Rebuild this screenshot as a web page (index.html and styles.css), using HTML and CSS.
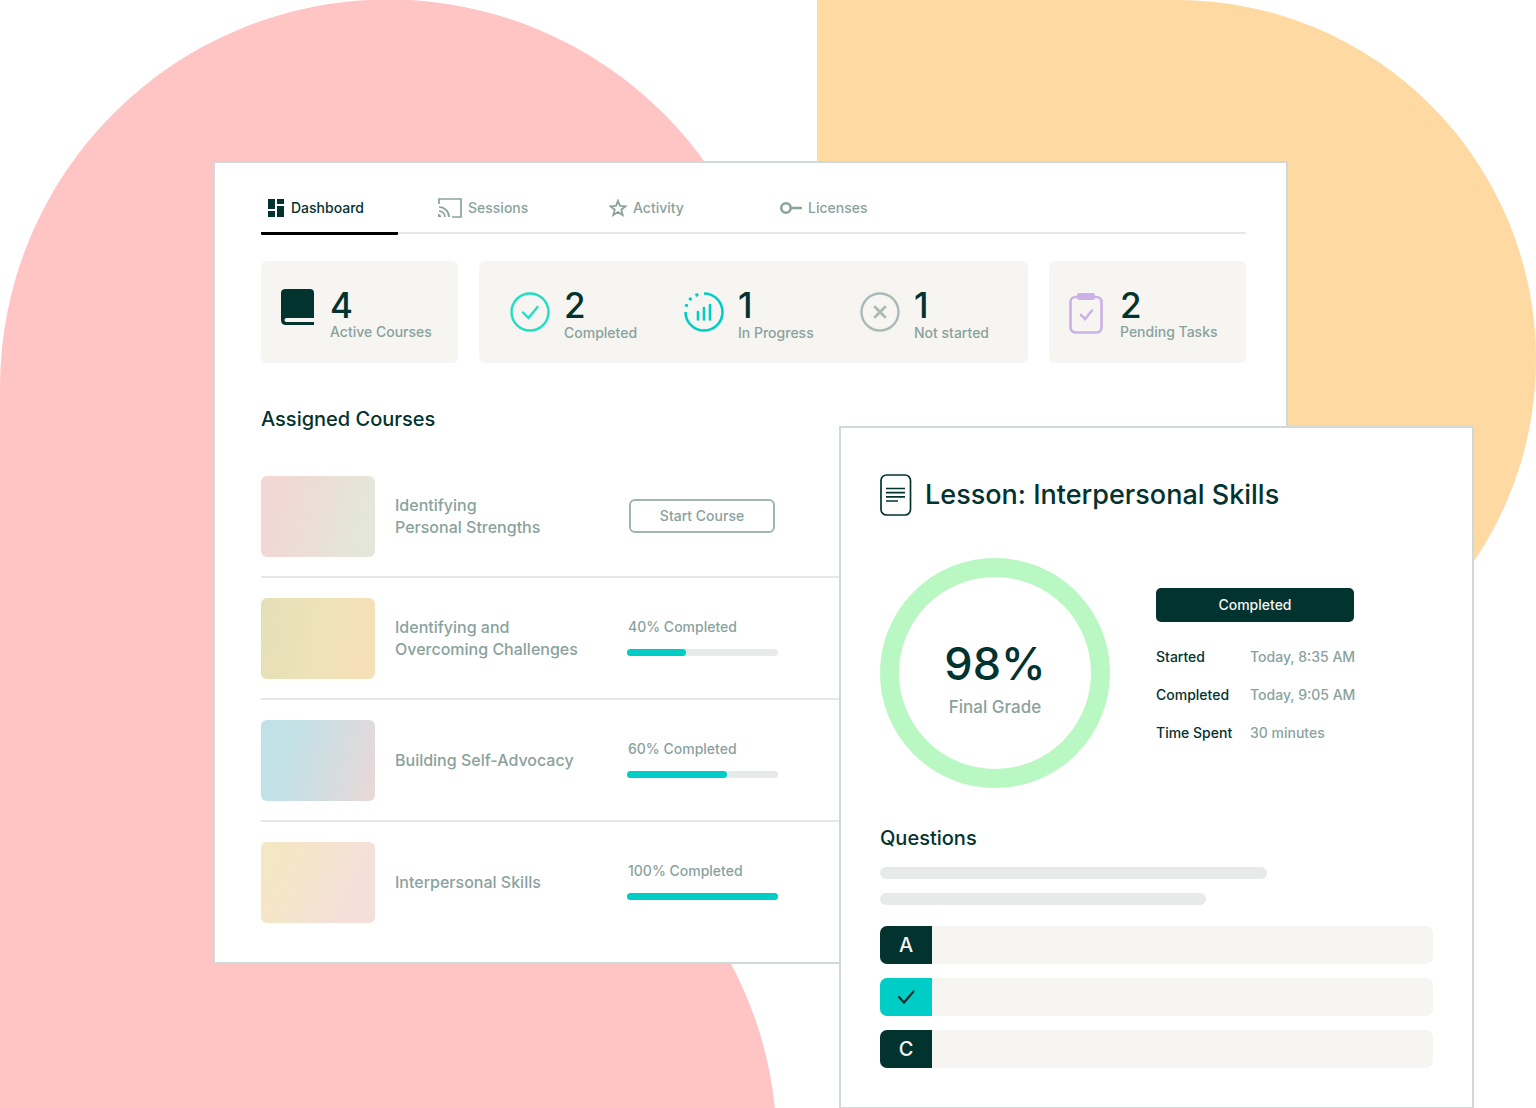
FILE: index.html
```html
<!DOCTYPE html>
<html lang="en">
<head>
<meta charset="utf-8">
<meta name="viewport" content="width=device-width, initial-scale=1">
<title>Course Dashboard</title>
<link rel="stylesheet" href="styles.css">
</head>
<body>
<div class="scene">
  <svg class="backdrop" viewBox="0 0 1536 1108" preserveAspectRatio="none" aria-hidden="true">
    <path fill="#ffc4c4" d="M0 1108V386A388 387 0 0 1 777 388L388 758A388 388 0 0 1 775 1108Z"/>
    <path fill="#ffd9a2" d="M817 0H1177A359 359 0 0 1 1177 718H817Z"/>
  </svg>

  <main class="dashboard">
    <nav class="tabs">
      <a class="tab tab-active" href="#dashboard" aria-current="page">
        <svg width="18" height="20" viewBox="0 0 18 20" fill="currentColor"><path d="M1 1h7v10H1zM10 1h7v5h-7zM1 13h7v6H1zM10 8h7v11h-7z"/></svg>
        Dashboard
      </a>
      <a class="tab" href="#sessions">
        <svg width="24" height="20" viewBox="0 0 24 20" fill="none" stroke="currentColor" stroke-width="1.700"><path d="M1 6V1h22v18h-9M1 9a10 10 0 0 1 10 10M1 13a6 6 0 0 1 6 6"/><path fill="currentColor" stroke="none" d="M0 16a3 3 0 0 1 3 3H0z"/></svg>
        Sessions
      </a>
      <a class="tab" href="#activity">
        <svg width="18" height="18" viewBox="1 1 16 16" fill="none" stroke="currentColor" stroke-width="1.600"><path d="M9 2.600l1.800 4.500 4.900.3-3.800 3.100 1.300 4.800L9 12.600l-4.200 2.700 1.300-4.800-3.800-3.100 4.900-.3z"/></svg>
        Activity
      </a>
      <a class="tab" href="#licenses">
        <svg width="22" height="14" viewBox="1 0 22 14" fill="none" stroke="currentColor" stroke-width="2.600"><circle cx="7" cy="7" r="4.700"/><path d="M12 7h10" stroke-linecap="round"/></svg>
        Licenses
      </a>
    </nav>

    <section class="stats" aria-label="Course summary">
      <div class="stat-card">
        <div class="stat">
          <svg width="35" height="38" viewBox="1 0 35 38"><path fill="#02332f" d="M6 0H30Q34 0 34 4V29H6.500Q4.500 29 4.500 31T6.500 33H34V36H6Q1 36 1 31V4Q1 0 6 0Z"/></svg>
          <p class="stat-text"><strong>4</strong><span>Active Courses</span></p>
        </div>
      </div>
      <div class="stat-card stat-group">
        <div class="stat">
          <svg width="40" height="40" viewBox="0 0 40 40" fill="none" stroke="#23ddc4" stroke-width="2.400" stroke-linecap="round"><circle cx="20" cy="20" r="18.500"/><path d="M13 20.500l5.500 5.500 9-11"/></svg>
          <p class="stat-text"><strong>2</strong><span>Completed</span></p>
        </div>
        <div class="stat">
          <svg width="40" height="40" viewBox="0 0 40 40" fill="none" stroke="#00cec6" stroke-width="2.600"><path d="M20 1.500A18.500 18.500 0 1 1 1.500 20"/><path d="M2 14.800l.9-2.700M5.300 8.100l2-2.200M11.500 3.500l2.700-1.100" stroke-width="3"/><path d="M14 20v7.500M20 16v11.500M26 13v14.500" stroke-linecap="round"/></svg>
          <p class="stat-text"><strong>1</strong><span>In Progress</span></p>
        </div>
        <div class="stat">
          <svg width="40" height="40" viewBox="0 0 40 40" fill="none" stroke="#a9baba" stroke-width="2.400" stroke-linecap="round"><circle cx="20" cy="20" r="18.500"/><path d="M15 15l10 10M25 15l-10 10" stroke-width="2.800"/></svg>
          <p class="stat-text"><strong>1</strong><span>Not started</span></p>
        </div>
      </div>
      <div class="stat-card stat-tasks">
        <div class="stat">
          <svg width="34" height="42" viewBox="0 0 34 42" fill="none" stroke="#ccb1e8" stroke-width="2.600" stroke-linecap="round"><rect x="1.500" y="5" width="31" height="35.500" rx="5"/><rect x="8" y="1" width="18" height="7" rx="2.500" fill="#ccb1e8" stroke="none"/><path d="M12 23l4 4 7-8.500"/></svg>
          <p class="stat-text"><strong>2</strong><span>Pending Tasks</span></p>
        </div>
      </div>
    </section>

    <h2 class="section-title">Assigned Courses</h2>
    <ul class="courses">
      <li class="course">
        <div class="thumb thumb-rose"></div>
        <h3 class="course-name">Identifying<br>Personal Strengths</h3>
        <button class="start" type="button">Start Course</button>
      </li>
      <li class="course">
        <div class="thumb thumb-gold"></div>
        <h3 class="course-name">Identifying and<br>Overcoming Challenges</h3>
        <div class="progress"><span>40% Completed</span><div class="bar"><div class="fill" style="width:39%"></div></div></div>
      </li>
      <li class="course">
        <div class="thumb thumb-blue"></div>
        <h3 class="course-name">Building Self-Advocacy</h3>
        <div class="progress"><span>60% Completed</span><div class="bar"><div class="fill" style="width:66%"></div></div></div>
      </li>
      <li class="course">
        <div class="thumb thumb-cream"></div>
        <h3 class="course-name">Interpersonal Skills</h3>
        <div class="progress"><span>100% Completed</span><div class="bar"><div class="fill" style="width:100%"></div></div></div>
      </li>
    </ul>
  </main>

  <article class="lesson">
    <header class="lesson-head">
      <svg width="32" height="42" viewBox="0 0 32 42" fill="none" stroke="#02332f" stroke-width="1.700"><rect x="1" y="1" width="29.500" height="40" rx="5.500"/><path d="M6 14.500h19M6 18.700h19M6 22.900h19M6 27h12"/></svg>
      <h1 class="lesson-title">Lesson: Interpersonal Skills</h1>
    </header>

    <section class="result">
      <div class="ring"><strong>98%</strong><span>Final Grade</span></div>
      <div class="details">
        <p class="status">Completed</p>
        <dl class="facts">
          <dt>Started</dt><dd>Today, 8:35 AM</dd>
          <dt>Completed</dt><dd>Today, 9:05 AM</dd>
          <dt>Time Spent</dt><dd>30 minutes</dd>
        </dl>
      </div>
    </section>

    <h2 class="questions-title">Questions</h2>
    <div class="skeleton skeleton-long"></div>
    <div class="skeleton skeleton-short"></div>
    <ul class="answers">
      <li class="answer"><span class="key">A</span></li>
      <li class="answer"><span class="key key-correct"><svg width="20" height="16" viewBox="0 0 20 16" fill="none" stroke="#12302e" stroke-width="2.200" stroke-linecap="round"><path d="M3 8l5 5.500L17.500 2.500"/></svg></span></li>
      <li class="answer"><span class="key">C</span></li>
    </ul>
  </article>
</div>
</body>
</html>
```

FILE: styles.css
```css
:root {
  --ink: #02332f;
  --muted: #8aa29d;
  --line: #e6e9e8;
  --frame: #d0d9d9;
  --panel: #f6f5f1;
  --teal: #00cec6;
}

* { box-sizing: border-box; }

body, h1, h2, h3, p, ul, dl, dd { margin: 0; }
ul { padding: 0; list-style: none; }

body {
  background: #fff;
  color: var(--ink);
  font-family: Inter, "Liberation Sans", sans-serif;
  font-size: 14px;
  font-weight: 500;
  line-height: 20px;
}

svg { display: block; flex: none; }

/* Overlapping cards share one grid row; the lesson card starts in column 2. */
.scene {
  position: relative;
  display: grid;
  grid-template-columns: 626fr 449fr 186fr;
  align-items: start;
  min-height: 100vh;
  padding: 161px 62px 0 213px;
  overflow: hidden;
}

.backdrop {
  position: absolute;
  inset: 0;
  width: 100%;
  height: 100%;
}

.dashboard, .lesson {
  position: relative;
  grid-row: 1;
  background: #fff;
  border: 2px solid var(--frame);
}

.dashboard {
  grid-column: 1 / 3;
  padding: 26px 40px 20px 46px;
}

.tabs {
  display: flex;
  gap: 34px;
  border-bottom: 2px solid var(--line);
}

.tab {
  display: flex;
  align-items: center;
  gap: 6px;
  width: 137px;
  height: 46px;
  margin-bottom: -3px;
  padding: 0 0 6px 6px;
  border-bottom: 3px solid transparent;
  border-radius: 1px;
  color: var(--muted);
  text-decoration: none;
}

.tab-active {
  border-color: #000;
  color: var(--ink);
}

.stats {
  display: grid;
  grid-template-columns: 197fr 549fr 197fr;
  gap: 21px;
  margin-top: 27px;
}

.stat-card {
  padding: 28px 20px 20px;
  border-radius: 6px;
  background: var(--panel);
}

.stat-group {
  display: grid;
  grid-template-columns: 174fr 176fr 168fr;
  padding: 28px 0 20px 31px;
}

.stat { display: flex; gap: 14px; }
.stat-group svg, .stat-tasks svg { margin-top: 3px; }
.stat-tasks .stat { gap: 17px; }

.stat-text { display: flex; flex-direction: column; white-space: nowrap; }
.stat-text strong { font-size: 35px; font-weight: 500; line-height: 33px; }
.stat-text span { color: var(--muted); }
.stat-group .stat-text span { margin-top: 1px; }

.section-title {
  margin-top: 42px;
  font-size: 20px;
  font-weight: 500;
  line-height: 28px;
}

.courses { margin-top: 23px; }

.course {
  display: grid;
  grid-template-columns: 114px 212px 151px;
  column-gap: 20px;
  align-items: center;
  padding: 20px 0 19px;
}

.course + .course { border-top: 2px solid var(--line); }

.thumb { height: 81px; border-radius: 6px; }
.thumb-rose { background: linear-gradient(105deg, #f1d8d5 20%, #e4e6da 85%); }
.thumb-gold { background: linear-gradient(95deg, #e5dfb7, #eee2b9 50%, #f6e0b9 85%); }
.thumb-blue { background: linear-gradient(105deg, #c2e1e6 25%, #d5dcdf 65%, #ead8d8); }
.thumb-cream { background: linear-gradient(115deg, #f4e7c3 15%, #f5e0d9 75%); }

.course-name {
  padding-bottom: 2px;
  color: var(--muted);
  font-size: 16px;
  font-weight: 500;
  line-height: 22px;
  white-space: nowrap;
}

.start {
  width: 146px;
  height: 34px;
  margin: 0 0 2px 2px;
  padding: 0;
  border: 2px solid #a0b5b2;
  border-radius: 6px;
  background: #fff;
  color: var(--muted);
  font: inherit;
}

.progress { padding-bottom: 4px; color: var(--muted); }
.progress span { padding-left: 1px; }
.bar { height: 7px; margin-top: 12px; border-radius: 4px; background: #e6eae9; }
.fill { height: 7px; border-radius: 4px; background: var(--teal); }

.lesson {
  grid-column: 2 / 4;
  margin-top: 265px;
  padding: 46px 39px 39px;
}

.lesson-head { display: flex; align-items: center; gap: 13px; }

.lesson-title {
  font-size: 27px;
  font-weight: 500;
  line-height: 36px;
  white-space: nowrap;
}

.result {
  display: flex;
  align-items: flex-start;
  gap: 46px;
  margin-top: 42px;
}

.ring {
  display: flex;
  flex: none;
  flex-direction: column;
  align-items: center;
  justify-content: center;
  gap: 6px;
  width: 230px;
  height: 230px;
  padding-top: 8px;
  border: 19px solid #b9f7c3;
  border-radius: 50%;
}

.ring strong { font-size: 45px; font-weight: 500; line-height: 54px; }
.ring span { color: var(--muted); font-size: 17px; line-height: 20px; }

.details { width: 198px; padding-top: 30px; }

.status {
  padding: 7px;
  border-radius: 5px;
  background: var(--ink);
  color: #f6f5f1;
  text-align: center;
}

.facts {
  display: grid;
  grid-template-columns: 80px 1fr;
  gap: 18px 14px;
  margin-top: 25px;
  white-space: nowrap;
}

.facts dd { color: var(--muted); }

.questions-title {
  margin: 36px 0 15px;
  font-size: 20px;
  font-weight: 500;
  line-height: 28px;
}

.skeleton { height: 12px; border-radius: 6px; background: #e6eae9; }
.skeleton-long { width: 70%; }
.skeleton-short { width: 59%; margin-top: 14px; }

.answers { display: grid; gap: 14px; margin-top: 21px; }
.answer { height: 38px; border-radius: 7px; background: var(--panel); overflow: hidden; }

.key {
  display: flex;
  align-items: center;
  justify-content: center;
  width: 52px;
  height: 38px;
  background: var(--ink);
  color: #f6f5f1;
  font-size: 20px;
}

.key-correct { background: var(--teal); }
```
